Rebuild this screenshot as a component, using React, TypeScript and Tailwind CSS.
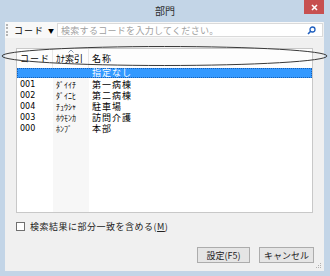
import React from 'react';

const rows = [
    { code: '001', kana: 'ﾀﾞｲｲﾁ', name: '第一病棟' },
    { code: '002', kana: 'ﾀﾞｲﾆﾋ', name: '第二病棟' },
    { code: '004', kana: 'ﾁｭｳｼｬ', name: '駐車場' },
    { code: '003', kana: 'ﾎｳﾓﾝｶ', name: '訪問介護' },
    { code: '000', kana: 'ﾎﾝﾌﾞ', name: '本部' },
];

const font = { fontFamily: '"Noto Sans CJK JP", "Noto Sans", sans-serif' };

export default function App() {
    return (
        <div className="relative w-[330px] h-[276px] bg-[#c3d5e7] flex flex-col overflow-hidden text-[9px] leading-[11px] text-black" style={font}>
            {/* title bar */}
            <div className="relative h-[22px] flex items-center justify-center shrink-0">
                <span className="text-[10px] text-[#2b2b2b] -mt-[1px]">部門</span>
                <div className="absolute right-[6px] top-0 w-[20px] h-[14px] bg-[#c75050] flex items-center justify-center">
                    <svg width="7" height="7" viewBox="0 0 7 7"><path d="M1 1 L6 6 M6 1 L1 6" stroke="#fff" strokeWidth="1.6" /></svg>
                </div>
            </div>

            {/* client */}
            <div className="ml-[5px] mr-[6px] mb-[7px] flex-1 bg-[#f0f0f0] flex flex-col">
                {/* toolbar */}
                <div className="h-[16px] flex items-center bg-[#f8f8f8] mr-[1px]">
                    <div className="ml-[1px] w-[2px] h-[12px] border-l-2 border-dotted border-[#b5b5b5]" />
                    <div className="ml-[6px] flex items-center gap-[4px] w-[42px] whitespace-nowrap">
                        <span className="tracking-[1px]">コード</span>
                        <span className="text-[6px]">▼</span>
                    </div>
                    <div className="ml-[1px] flex-1 h-[14px] bg-white border border-[#dadada] flex items-center pl-[3px] pr-[6px]">
                        <span className="flex-1 text-[#a0a0a0] tracking-[0.3px] whitespace-nowrap">検索するコードを入力してください。</span>
                        <svg width="9" height="9" viewBox="0 0 9 9"><circle cx="5.5" cy="3.5" r="2.5" fill="none" stroke="#1f5fbf" strokeWidth="1.3" /><path d="M3.7 5.3 L1 8" stroke="#1f5fbf" strokeWidth="1.6" /></svg>
                    </div>
                </div>

                {/* list */}
                <div className="mt-[10px] ml-[11px] mr-[11px] h-[165px] bg-white border border-[#c8c8c8] flex flex-col relative">
                    <div className="h-[19px] flex items-center bg-[#fdfdfd] shrink-0">
                        <div className="w-[36px] h-full flex items-center pl-[3px] border-r border-[#e6e6e6] tracking-[1px]">コード</div>
                        <div className="relative w-[36px] h-full flex items-center pl-[3px] border-r border-[#e6e6e6]">
                            ｶﾅ索引
                            <svg className="absolute left-[15px] top-[0px]" width="6" height="4" viewBox="0 0 6 4"><path d="M0.5 3.5 L3 1 L5.5 3.5" fill="none" stroke="#8a9bb0" strokeWidth="1" /></svg>
                        </div>
                        <div className="pl-[3px] tracking-[1px]">名称</div>
                    </div>
                    <div className="flex-1 flex relative">
                        <div className="absolute left-[36px] top-0 bottom-0 w-[36px] bg-[#f7f7f7]" />
                        <div className="relative flex-1 flex flex-col">
                            <div className="h-[11px] pb-[1px]">
                                <div className="h-[10px] bg-[#3399ff] border border-dotted border-[#1a5fb4] flex items-center text-white leading-[8px]">
                                    <span className="ml-[74px] tracking-[1px]">指定なし</span>
                                </div>
                            </div>
                            {rows.map((r) => (
                                <div key={r.code} className="h-[11px] flex items-center leading-[11px]">
                                    <span className="w-[36px] pl-[3px] text-[8px]" style={{ fontFamily: '"DejaVu Sans", sans-serif' }}>{r.code}</span>
                                    <span className="w-[36px] pl-[3px] text-[8px]">{r.kana}</span>
                                    <span className="pl-[3px] tracking-[1px]">{r.name}</span>
                                </div>
                            ))}
                        </div>
                    </div>
                </div>

                {/* checkbox */}
                <div className="mt-[9px] ml-[11px] flex items-center h-[9px]">
                    <div className="w-[9px] h-[9px] bg-white border border-[#707070]" />
                    <span className="ml-[5px] tracking-[0.5px] text-[#222]">検索結果に部分一致を含める(<span className="underline">M</span>)</span>
                </div>

                {/* buttons */}
                <div className="mt-[16px] mr-[10px] flex justify-end gap-[9px]">
                    <button className="w-[53px] h-[16px] bg-[#e5e5e5] border border-[#acacac] text-[9px] text-[#222] flex items-center justify-center">設定(F5)</button>
                    <button className="w-[55px] h-[16px] bg-[#e5e5e5] border border-[#acacac] text-[9px] text-[#222] flex items-center justify-center">キャンセル</button>
                </div>
                <div className="flex-1 flex items-end justify-end pr-[2px] pb-[2px]">
                    <svg width="6" height="6" viewBox="0 0 6 6" fill="#b0b0b0">
                        <rect x="4" y="0" width="1" height="1" /><rect x="2" y="2" width="1" height="1" /><rect x="4" y="2" width="1" height="1" />
                        <rect x="0" y="4" width="1" height="1" /><rect x="2" y="4" width="1" height="1" /><rect x="4" y="4" width="1" height="1" />
                    </svg>
                </div>
            </div>

            {/* annotation ellipse */}
            <svg className="absolute left-0 top-0 pointer-events-none" width="330" height="276">
                <ellipse cx="164.5" cy="56" rx="162.5" ry="9.5" fill="none" stroke="#3a3a3a" strokeWidth="1" />
            </svg>
        </div>
    );
}
